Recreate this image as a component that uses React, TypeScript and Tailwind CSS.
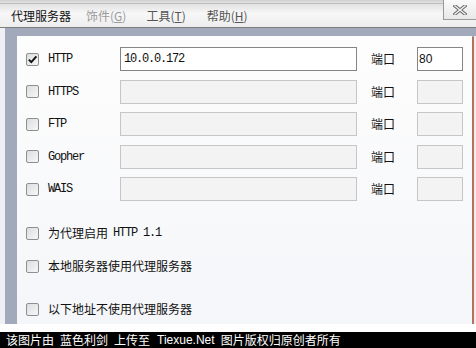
import React from 'react';

const cjk = '"Noto Sans CJK SC", "Liberation Sans", sans-serif';
const mono = '"Liberation Mono", "Noto Sans CJK SC", monospace';

const Check: React.FC<{ checked?: boolean }> = ({ checked }) => (
  <div className="w-[13px] h-[13px] shrink-0 rounded-[2px] border border-[#8e8f8f] bg-gradient-to-br from-[#dcdde0] to-[#f7f7f7] flex items-center justify-center">
    {checked && (
      <svg width="11" height="11" viewBox="0 0 11 11">
        <path d="M1.8 5.6 L4.3 8.2 L9.4 2.4" fill="none" stroke="#111" strokeWidth="1.9" />
      </svg>
    )}
  </div>
);

const ProxyRow: React.FC<{ label: string; host?: string; port?: string; active?: boolean }> = ({ label, host, port, active }) => (
  <div className="flex items-center h-[24px]">
    <Check checked={active} />
    <span className="ml-[9px] w-[72px] text-[12px] tracking-[-1.2px] text-[#111]" style={{ fontFamily: mono }}>
      {label}
    </span>
    <div
      className={
        active
          ? 'w-[237px] h-[24px] border border-[#858585] bg-white flex items-center pl-[3px]'
          : 'w-[237px] h-[24px] border border-[#c6c6c6] bg-[#f3f3f3]'
      }
    >
      {host && (
        <span className="text-[12px] tracking-[-1.2px] text-[#111]" style={{ fontFamily: mono }}>
          {host}
        </span>
      )}
    </div>
    <span className="ml-[14px] w-[46px] text-[12px] text-[#111]" style={{ fontFamily: cjk }}>
      端口
    </span>
    <div
      className={
        active
          ? 'w-[46px] h-[24px] border border-[#858585] bg-white flex items-center pl-[1px]'
          : 'w-[46px] h-[24px] border border-[#c6c6c6] bg-[#f3f3f3]'
      }
    >
      {port && <span className="text-[12px] text-[#111]" style={{ fontFamily: '"Liberation Sans", sans-serif' }}>{port}</span>}
    </div>
  </div>
);

const OptionRow: React.FC<{ children: React.ReactNode }> = ({ children }) => (
  <div className="flex items-center h-[24px]">
    <Check />
    <span className="ml-[9px] text-[12px] text-[#111] flex items-center" style={{ fontFamily: cjk }}>
      {children}
    </span>
  </div>
);

export default function App() {
  return (
    <div className="w-[476px] h-[348px] overflow-hidden bg-white flex flex-col" style={{ fontFamily: cjk }}>
      {/* Menu bar */}
      <div className="relative h-[28px] shrink-0 border-b border-[#7d7d7d] bg-gradient-to-b from-[#d9d9d9] via-[#f7f7f7] to-[#ededed] flex items-end pb-[3px]">
        <div className="absolute top-0 left-0 right-0 h-[4px] bg-gradient-to-b from-[#cfcfcf] to-[#e2e2e2] border-b border-[#bdbdbd]" />
        <div className="flex items-center text-[12px] leading-[16px]">
          <span className="ml-[11px] text-[#111]">代理服务器</span>
          <span className="ml-[15px] text-[#9b9b9b]">
            饰件(<span className="underline">G</span>)
          </span>
          <span className="ml-[20px] text-[#555]">
            工具(<span className="underline">T</span>)
          </span>
          <span className="ml-[21px] text-[#555]">
            帮助(<span className="underline">H</span>)
          </span>
        </div>
        <div className="absolute top-0 right-0 w-[33px] h-[20px] border-l border-b border-[#9a9a9a] bg-gradient-to-b from-[#fafafa] to-[#e8e8e8] flex items-center justify-center">
          <svg width="14" height="10" viewBox="0 0 14 10">
            <path d="M2 1 L12 9 M12 1 L2 9" stroke="#6a6a6a" strokeWidth="3.4" strokeLinecap="square" />
            <path d="M2 1 L12 9 M12 1 L2 9" stroke="#f4f4f4" strokeWidth="1.4" strokeLinecap="square" />
          </svg>
        </div>
      </div>

      {/* Main area */}
      <div className="h-[296px] shrink-0 flex">
        <div className="w-[5px] bg-[#eef0f3]" />
        <div className="flex-1 bg-[#a1a9bb] pl-[12px] pt-[8px] flex">
          <div className="flex-1 bg-gradient-to-b from-[#fdfdfd] to-[#f5f6f9] pl-[9px] pt-[11px] flex flex-col">
            <div className="flex flex-col gap-[8.5px]">
              <ProxyRow label="HTTP" host="10.0.0.172" port="80" active />
              <ProxyRow label="HTTPS" />
              <ProxyRow label="FTP" />
              <ProxyRow label="Gopher" />
              <ProxyRow label="WAIS" />
            </div>
            <div className="mt-[20px]">
              <OptionRow>
                为代理启用
                <span className="ml-[5px] text-[12px] tracking-[-1.2px]" style={{ fontFamily: mono }}>
                  HTTP 1.1
                </span>
              </OptionRow>
            </div>
            <div className="mt-[9px]">
              <OptionRow>本地服务器使用代理服务器</OptionRow>
            </div>
            <div className="mt-[19px]">
              <OptionRow>以下地址不使用代理服务器</OptionRow>
            </div>
          </div>
          <div className="w-[2px] bg-[#b5705f] mt-[1px]" />
          <div className="w-[2px] bg-[#f2eeee]" />
        </div>
      </div>

      <div className="h-[8px] shrink-0 bg-white" />

      {/* Watermark bar */}
      <div className="h-[16px] shrink-0 bg-black flex items-center pl-[6px] text-[12px] leading-[16px] text-white whitespace-nowrap">
        <span>该图片由</span>
        <span className="ml-[6px]">蓝色利剑</span>
        <span className="ml-[6px]">上传至</span>
        <span className="ml-[7px]" style={{ fontFamily: '"Liberation Sans", sans-serif' }}>Tiexue.Net</span>
        <span className="ml-[6px]">图片版权归原创者所有</span>
      </div>
    </div>
  );
}
